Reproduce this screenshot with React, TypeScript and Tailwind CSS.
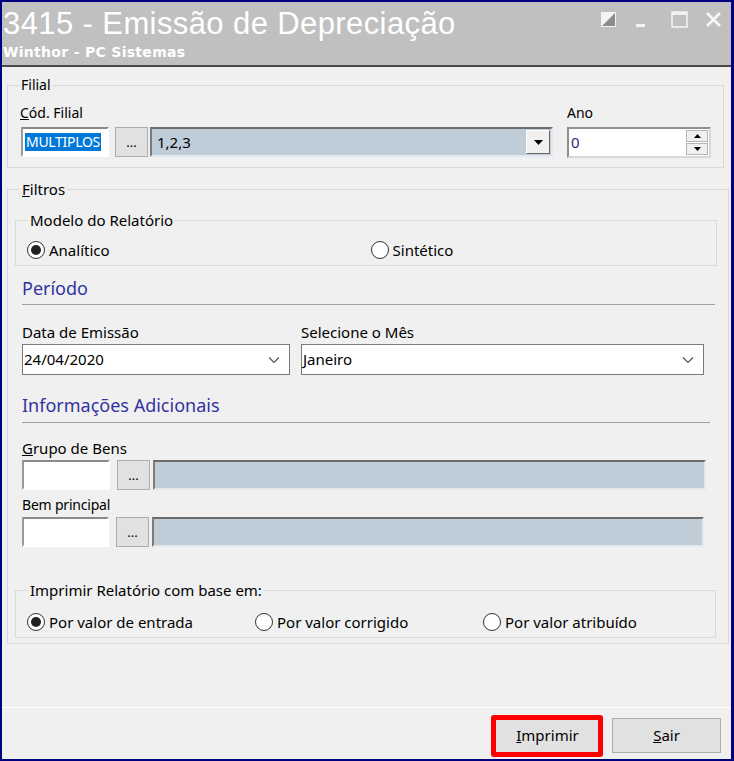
import React from "react";

// Legacy Winthor report window: title bar, branch/filters form and action bar.
const UI = { fontFamily: '"Noto Sans", "DejaVu Sans", sans-serif' };
const TITLE = { fontFamily: '"Liberation Sans", Arial, sans-serif' };
const SUB = { fontFamily: '"DejaVu Sans", Verdana, sans-serif' };

function Radio({ checked, label, className = "" }: { checked?: boolean; label: string; className?: string }) {
  return (
    <label className={`flex items-center gap-[4px] text-[15px] leading-[20px] text-black ${className}`}>
      <span className="flex size-[18px] items-center justify-center rounded-full border border-[#333] bg-white">
        {checked && <span className="size-[10px] rounded-full bg-[#222]" />}
      </span>
      {label}
    </label>
  );
}

function DotsButton({ className = "" }: { className?: string }) {
  return (
    <button className={`flex h-[30px] w-[33px] items-end justify-center border border-[#adadad] bg-[#e1e1e1] pb-[7px] text-[13px] leading-none text-black ${className}`}>
      ...
    </button>
  );
}

// white entry field with the sunken 3D edge
function Sunken({ className = "", children }: { className?: string; children?: React.ReactNode }) {
  return (
    <div className={`h-[30px] border-2 border-b-white border-l-[#9a9a9a] border-r-white border-t-[#8a8a8a] ${className}`}>{children}</div>
  );
}

// read-only lookup description box
function Lookup({ className = "", children }: { className?: string; children?: React.ReactNode }) {
  return (
    <div className={`flex h-[30px] border-2 border-b-[#e4e8ec] border-l-[#7b7b7b] border-r-[#e4e8ec] border-t-[#6b6b6b] bg-[#bfcdd9] ${className}`}>{children}</div>
  );
}

function Chevron() {
  return (
    <svg width="12" height="8" viewBox="0 0 12 8" className="ml-auto mr-[9px]">
      <path d="M1 1.5 L6 6.5 L11 1.5" fill="none" stroke="#555" strokeWidth="1.2" />
    </svg>
  );
}

function Select({ value, className = "" }: { value: string; className?: string }) {
  return (
    <div className={`flex h-[31px] items-center border border-[#7a7a7a] bg-white pl-[1px] text-[15px] text-black ${className}`}>
      {value}
      <Chevron />
    </div>
  );
}

export default function App() {
  return (
    <div className="h-[761px] w-[734px] bg-[#000080] pb-[2px] pl-[2px] pr-[3px] pt-[2px]" style={UI}>
      <div className="flex h-full flex-col bg-[#f0f0f0]">
        {/* title bar */}
        <div className="relative h-[65px] border-b-2 border-[#4a4a4a] bg-[#c0c0c0] pl-[1px] text-white">
          <div className="pt-[4px] text-[31px] leading-[35px] tracking-[0.4px]" style={TITLE}>
            3415 - Emissão de Depreciação
          </div>
          <div className="mt-[3px] text-[14px] font-bold leading-[16px] tracking-[0.3px]" style={SUB}>
            Winthor - PC Sistemas
          </div>
          <div className="absolute right-[9px] top-[8px] flex items-start">
            <svg width="15" height="15" viewBox="0 0 15 15" className="mr-[20px] mt-[2px]">
              <rect x="0.5" y="0.5" width="14" height="14" fill="#f4f4f4" stroke="#f4f4f4" />
              <path d="M14 1 L14 14 L1 14 Z" fill="#8c8c8c" />
            </svg>
            <div className="mr-[26px] mt-[14px] h-[3px] w-[9px] bg-[#f4f4f4]" />
            <svg width="17" height="17" viewBox="0 0 17 17" className="mr-[17px] mt-[1px]">
              <rect x="1" y="1" width="15" height="15" fill="none" stroke="#f2f2f2" strokeWidth="1.6" />
              <rect x="1" y="1" width="15" height="3" fill="#f2f2f2" />
            </svg>
            <svg width="17" height="17" viewBox="0 0 17 17" className="mt-[1px]">
              <path d="M2 2 L15 15 M15 2 L2 15" stroke="#f7f7f7" strokeWidth="2.6" />
            </svg>
          </div>
        </div>

        <div className="flex-1 px-[5px] pt-[10px]">
          {/* Filial */}
          <fieldset className="w-[716px] border border-[#d9d9d9] pb-[9px] pl-[12px] pr-[12px]">
            <legend className="px-[1px] text-[14px] leading-[16px] text-black">Filial</legend>
            <div className="mt-[12px] flex items-start">
              <div>
                <div className="text-[14px] leading-[16px] text-black">
                  <span className="underline">C</span>ód. Filial
                </div>
                <div className="mt-[6px] flex">
                  <Sunken className="ml-[1px] flex w-[88px] items-center bg-white pl-[2px]">
                    <span className="bg-[#0078d7] px-[1px] text-[14px] leading-[18px] tracking-[-0.3px] text-white">MULTIPLOS</span>
                  </Sunken>
                  <DotsButton className="ml-[6px]" />
                  <Lookup className="ml-[2px] w-[403px] items-center pl-[5px]">
                    <span className="text-[15px] text-black">1,2,3</span>
                    <span className="ml-auto mr-[1px] flex h-[24px] w-[24px] items-center justify-center border border-b-[#6a6a6a] border-l-white border-r-[#6a6a6a] border-t-white bg-[#f0f0f0]">
                      <svg width="9" height="5" viewBox="0 0 9 5">
                        <path d="M0 0 H9 L4.5 5 Z" fill="#000" />
                      </svg>
                    </span>
                  </Lookup>
                </div>
              </div>
              <div className="ml-[14px]">
                <div className="text-[14px] leading-[16px] text-black">Ano</div>
                <div className="mt-[6px] flex h-[31px] w-[144px] items-center border-2 border-b-[#d8d8d8] border-l-[#8f8f8f] border-r-[#d8d8d8] border-t-[#8f8f8f] bg-white pl-[2px]">
                  <span className="text-[15px] text-[#2c1f7a]">0</span>
                  <div className="ml-auto mr-[1px] flex flex-col gap-[1px]">
                    <span className="flex h-[12px] w-[22px] items-center justify-center border border-[#b5b5b5] bg-[#f0f0f0]">
                      <svg width="7" height="4" viewBox="0 0 7 4">
                        <path d="M0 4 H7 L3.5 0 Z" fill="#000" />
                      </svg>
                    </span>
                    <span className="flex h-[12px] w-[22px] items-center justify-center border border-[#b5b5b5] bg-[#f0f0f0]">
                      <svg width="7" height="4" viewBox="0 0 7 4">
                        <path d="M0 0 H7 L3.5 4 Z" fill="#000" />
                      </svg>
                    </span>
                  </div>
                </div>
              </div>
            </div>
          </fieldset>

          {/* Filtros */}
          <fieldset className="mt-[13px] w-[717px] border border-[#d9d9d9] pb-[5px] pl-[7px] pr-[6px]">
            <legend className="ml-[5px] px-[2px] text-[15px] leading-[16px] text-black">
              <span className="underline">F</span>iltros
            </legend>

            <fieldset className="mt-[15px] w-[702px] border border-[#d9d9d9] pb-[5px] pl-[11px]">
              <legend className="ml-[1px] px-[2px] text-[15px] leading-[16px] text-black">Modelo do Relatório</legend>
              <div className="mt-[12px] flex">
                <Radio checked label="Analítico" />
                <Radio label="Sintético" className="ml-[261px]" />
              </div>
            </fieldset>

            <div className="px-[7px]">
              <div className="mt-[11px] w-[693px] border-b border-[#a0a0a0] pb-[5px] text-[18px] leading-[22px] text-[#33339f]">Período</div>
              <div className="mt-[19px] flex gap-[11px]">
                <div>
                  <div className="text-[15px] leading-[16px] text-black">Data de Emissão</div>
                  <Select value="24/04/2020" className="mt-[4px] w-[268px]" />
                </div>
                <div>
                  <div className="text-[15px] leading-[16px] text-black">Selecione o Mês</div>
                  <Select value="Janeiro" className="mt-[4px] w-[403px]" />
                </div>
              </div>

              <div className="mt-[19px] w-[688px] border-b border-[#a0a0a0] pb-[6px] text-[18px] leading-[22px] text-[#33339f]">
                Informações Adicionais
              </div>

              <div className="mt-[17px] text-[15px] leading-[16px] text-black">
                <span className="underline">G</span>rupo de Bens
              </div>
              <div className="mt-[4px] flex">
                <Sunken className="w-[88px] bg-white" />
                <DotsButton className="ml-[7px]" />
                <Lookup className="ml-[3px] w-[553px]" />
              </div>

              <div className="mt-[7px] text-[14px] leading-[16px] tracking-[-0.2px] text-black">Bem principal</div>
              <div className="mt-[4px] flex">
                <Sunken className="w-[87px] bg-white" />
                <DotsButton className="ml-[7px]" />
                <Lookup className="ml-[3px] w-[552px]" />
              </div>
            </div>

            <fieldset className="mt-[35px] w-[701px] border border-[#d9d9d9] pb-[5px] pl-[11px]">
              <legend className="ml-[1px] px-[2px] text-[15px] leading-[16px] text-black">Imprimir Relatório com base em:</legend>
              <div className="mt-[14px] flex">
                <Radio checked label="Por valor de entrada" className="w-[228px]" />
                <Radio label="Por valor corrigido" className="w-[228px]" />
                <Radio label="Por valor atribuído" />
              </div>
            </fieldset>
          </fieldset>
        </div>

        {/* action bar */}
        <div className="flex h-[52px] items-start justify-end gap-[10px] border-t border-white pr-[10px] pt-[10px]">
          <div className="relative">
            <button className="h-[35px] w-[109px] border border-[#adadad] bg-[#e1e1e1] text-[15px] text-black">
              <span className="underline">I</span>mprimir
            </button>
            <span className="pointer-events-none absolute -bottom-[4px] -left-[2px] -right-[1px] -top-[3px] rounded-[3px] border-[5px] border-[#ff0000]" />
          </div>
          <button className="h-[35px] w-[109px] border border-[#adadad] bg-[#e1e1e1] text-[15px] text-black">
            <span className="underline">S</span>air
          </button>
        </div>
      </div>
    </div>
  );
}
